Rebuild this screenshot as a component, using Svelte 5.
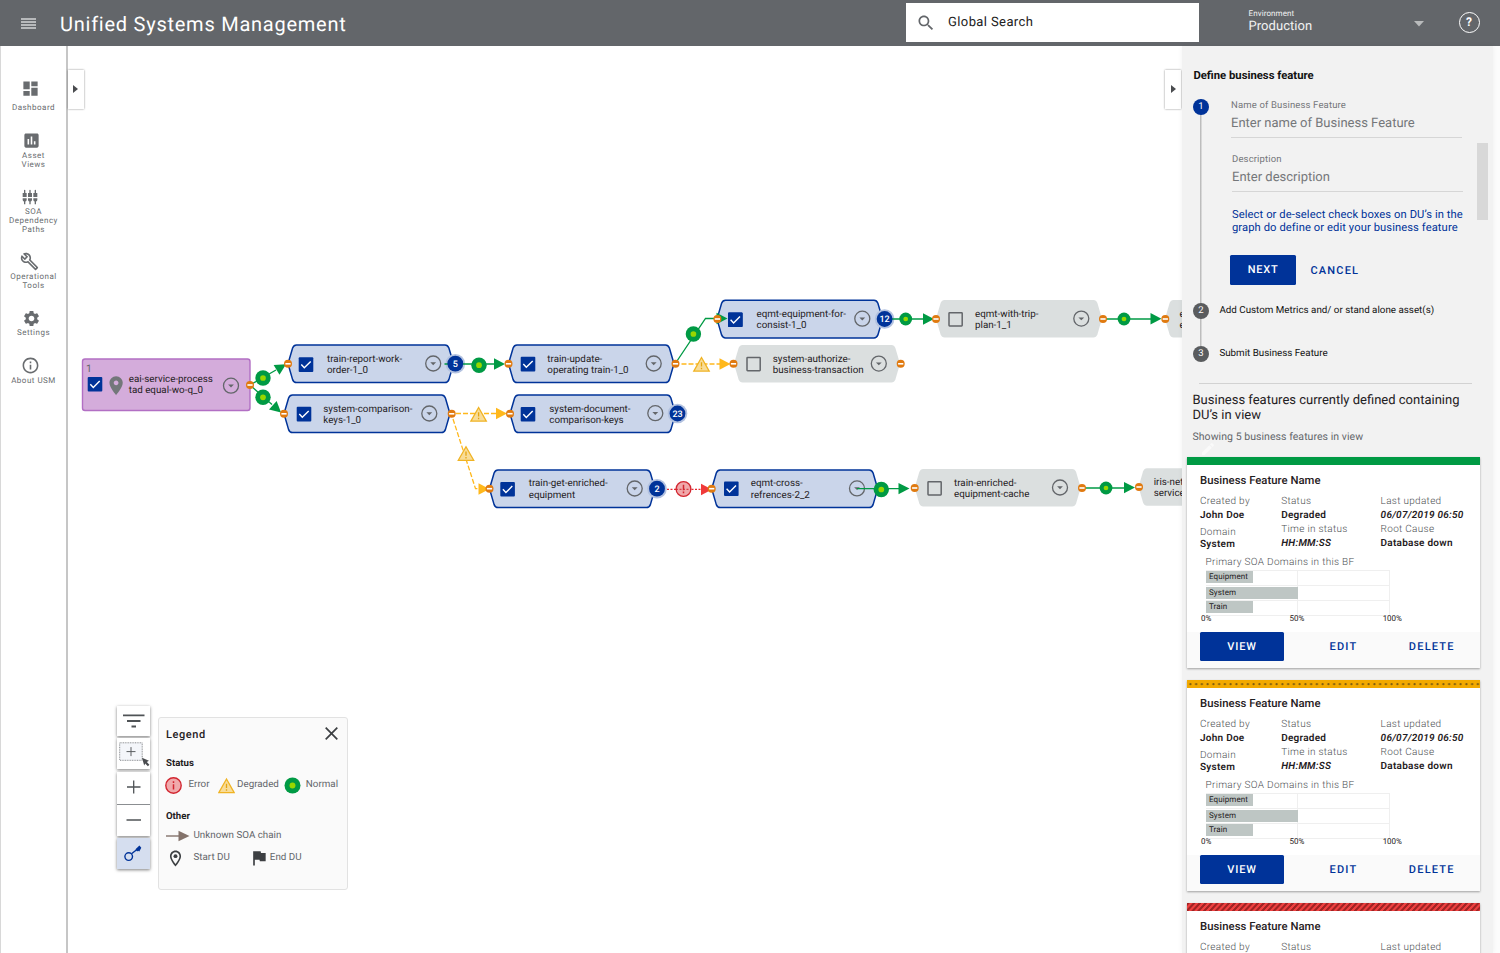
<script>
    const navItems = [
        {lines: ["Dashboard"], icon: "M3 13h8V3H3v10zm0 8h8v-6H3v6zm10 0h8V11h-8v10zm0-18v6h8V3h-8z"},
        {lines: ["Asset", "Views"], icon: "M19 3H5c-1.1 0-2 .9-2 2v14c0 1.1.9 2 2 2h14c1.1 0 2-.9 2-2V5c0-1.1-.9-2-2-2zM9 17H7v-7h2v7zm4 0h-2V7h2v10zm4 0h-2v-4h2v4z"},
        {lines: ["SOA", "Dependency", "Paths"], icon: "M5 2c0-.55-.45-1-1-1s-1 .45-1 1v4H1v6h6V6H5V2zm4 14c0 1.3.84 2.4 2 2.82V23h2v-4.18c1.16-.41 2-1.51 2-2.82v-2H9v2zm-8 0c0 1.3.84 2.4 2 2.82V23h2v-4.18C6.16 18.4 7 17.3 7 16v-2H1v2zM21 6V2c0-.55-.45-1-1-1s-1 .45-1 1v4h-2v6h6V6h-2zm-8-4c0-.55-.45-1-1-1s-1 .45-1 1v4H9v6h6V6h-2V2zm4 14c0 1.3.84 2.4 2 2.82V23h2v-4.18c1.16-.41 2-1.51 2-2.82v-2h-6v2z"},
        {lines: ["Operational", "Tools"], icon: "M22.61 18.99l-9.08-9.08c.93-2.34.45-5.1-1.44-7C9.79.61 6.21.4 3.66 2.26L7.5 6.11 6.08 7.52 2.25 3.69C.39 6.23.6 9.82 2.9 12.11c1.86 1.86 4.57 2.35 6.89 1.48l9.11 9.11c.39.39 1.02.39 1.41 0l2.3-2.3c.4-.38.4-1.01 0-1.41zm-3 1.6l-9.46-9.46c-.61.45-1.29.72-2 .82-1.36.2-2.79-.21-3.83-1.25C3.37 9.76 2.93 8.5 3 7.26l3.09 3.09 4.24-4.24-3.09-3.09c1.24-.07 2.49.37 3.44 1.31 1.08 1.08 1.49 2.57 1.24 3.96-.12.71-.42 1.37-.88 1.96l9.45 9.45-.88.89z"},
        {lines: ["Settings"], icon: "M19.14 12.94c.04-.3.06-.61.06-.94 0-.32-.02-.64-.07-.94l2.03-1.58c.18-.14.23-.41.12-.61l-1.92-3.32c-.12-.22-.37-.29-.59-.22l-2.39.96c-.5-.38-1.03-.7-1.62-.94L14.4 2.81c-.04-.24-.24-.41-.48-.41h-3.84c-.24 0-.43.17-.47.41L9.25 5.35c-.59.24-1.13.57-1.62.94l-2.39-.96c-.22-.08-.47 0-.59.22L2.74 8.87c-.12.21-.08.47.12.61l2.03 1.58c-.05.3-.09.63-.09.94s.02.64.07.94l-2.03 1.58c-.18.14-.23.41-.12.61l1.92 3.32c.12.22.37.29.59.22l2.39-.96c.5.38 1.03.7 1.62.94l.36 2.54c.05.24.24.41.48.41h3.84c.24 0 .44-.17.47-.41l.36-2.54c.59-.24 1.13-.56 1.62-.94l2.39.96c.22.08.47 0 .59-.22l1.92-3.32c.12-.22.07-.47-.12-.61l-2.01-1.58zM12 15.6c-1.98 0-3.6-1.62-3.6-3.6s1.62-3.6 3.6-3.6 3.6 1.62 3.6 3.6-1.62 3.6-3.6 3.6z"},
        {lines: ["About USM"], icon: "M11 7h2v2h-2zm0 4h2v6h-2zm1-9C6.48 2 2 6.48 2 12s4.48 10 10 10 10-4.48 10-10S17.52 2 12 2zm0 18c-4.41 0-8-3.59-8-8s3.59-8 8-8 8 3.59 8 8-3.59 8-8 8z"}
    ];

    // x / y is the top left of the hexagon, the rest are graph coordinates
    const nodes = [
        {x: 288, y: 345, w: 165.5, on: true, check: [298.7, 357.3], text: [327, 361.6], menu: [433.2, 363.5], lines: ["train-report-work-", "order-1_0"]},
        {x: 284, y: 395, w: 166, on: true, check: [296.7, 406.8], text: [323.3, 411.8], menu: [429.3, 413.5], lines: ["system-comparison-", "keys-1_0"]},
        {x: 508.5, y: 345, w: 165.5, on: true, check: [520.7, 356.8], text: [547.3, 361.6], menu: [653.7, 363.5], lines: ["train-update-", "operating train-1_0"]},
        {x: 510, y: 395, w: 165.5, on: true, check: [520.7, 407], text: [549.3, 411.5], menu: [655.3, 413.2], lines: ["system-document-", "comparison-keys"]},
        {x: 717, y: 300.3, w: 165.5, on: true, check: [728, 312.5], text: [756.5, 316.6], menu: [862.3, 318.7], lines: ["eqmt-equipment-for-", "consist-1_0"]},
        {x: 489.5, y: 470, w: 165.5, on: true, check: [500.3, 482], text: [528.7, 486.2], menu: [634.7, 488.5], lines: ["train-get-enriched-", "equipment"]},
        {x: 711.7, y: 470, w: 166, on: true, check: [724, 481.5], text: [750.7, 486.2], menu: [857, 488.4], lines: ["eqmt-cross-", "refrences-2_2"]},
        {x: 734, y: 345, w: 166, on: false, check: [746.3, 356.8], text: [772.7, 361.6], menu: [878.8, 363.6], lines: ["system-authorize-", "business-transaction"]},
        {x: 936, y: 300, w: 166, on: false, check: [948.3, 312], text: [975, 316.6], menu: [1081.3, 318.6], lines: ["eqmt-with-trip-", "plan-1_1"]},
        {x: 914.7, y: 469, w: 166, on: false, check: [927.3, 481], text: [954, 485.6], menu: [1060, 487.5], lines: ["train-enriched-", "equipment-cache"]},
        {x: 1165, y: 300, w: 167, on: false, text: [1179.5, 316.6], lines: ["e", "e"]},
        {x: 1138.5, y: 468.3, w: 167, on: false, text: [1153.7, 484.8], lines: ["iris-net", "service"]}
    ];

    const links = [
        {kind: "normal", d: "M250 385L276 370", tip: [286, 364.3], angle: -31},
        {kind: "normal", d: "M250 385L272 404.5", tip: [281, 412.6], angle: 42},
        {kind: "normal", d: "M444.5 364H495", tip: [505, 364], angle: 0},
        {kind: "normal", d: "M675 364L705.5 318.5H718", tip: [727.5, 318.5], angle: 0},
        {kind: "normal", d: "M885 319H924", tip: [934, 319], angle: 0},
        {kind: "normal", d: "M1103 319H1151", tip: [1161.5, 318.7], angle: 0},
        {kind: "normal", d: "M857 488.7H899", tip: [909.5, 488.6], angle: 0},
        {kind: "normal", d: "M1082 488H1124", tip: [1135, 487.6], angle: 0},
        {kind: "degraded", d: "M681.5 364H720", tip: [730.5, 364], angle: 0},
        {kind: "degraded", d: "M456 413.5H496", tip: [507, 413.5], angle: 0},
        {kind: "degraded", d: "M453 419L475.5 488.6H479", tip: [489.5, 489], angle: 0},
        {kind: "error", d: "M667 489.3H703", tip: [712, 489.5], angle: 0}
    ];

    const normals = [[263, 378, 7.7], [263, 397.3, 7.7], [479, 365.2, 7.7], [693.4, 334, 7.7], [905.7, 319, 6.4], [1124, 319, 6.4], [881.3, 489.5, 7.7], [1106, 488, 6.4]];
    const warnings = [[701.5, 364.5], [478.6, 414.5], [466, 453.7]];
    const ports = [[250, 385], [288, 363.8], [284, 413.8], [451.7, 413.8], [508.5, 363.8], [675.5, 363.8], [510, 413.7], [717.4, 319], [733.5, 363.8], [900.7, 363.8], [489.5, 488.7], [711.7, 488.7], [936, 319], [1103, 319], [1165.3, 319], [914.7, 488], [1082, 488], [1139, 487]];
    const badges = [[455.3, 363.7, 5], [677.5, 413.5, 23], [884.6, 319, 12], [657, 488.7, 2]];

    const statuses = ["ok", "warn", "bad"];
    const domains = [{name: "Equipment", share: 25.5}, {name: "System", share: 50.5}, {name: "Train", share: 25.5}];

    // hexagon with slightly rounded corners
    function hexagon(x, y, w, h) {
        const r = x + w;
        const b = y + h;
        const m = y + h / 2;
        return `M${x} ${m}L${x + 4.6} ${y + 3}Q${x + 5.8} ${y} ${x + 8.5} ${y}H${r - 8.5}Q${r - 5.8} ${y} ${r - 4.6} ${y + 3}L${r} ${m}L${r - 4.6} ${b - 3}Q${r - 5.8} ${b} ${r - 8.5} ${b}H${x + 8.5}Q${x + 5.8} ${b} ${x + 4.6} ${b - 3}Z`;
    }
</script>

{#snippet checkbox(x, y, on)}
    {#if on}
        <rect {x} {y} width="14.6" height="14.6" rx="1" fill="#003399"/>
        <path d="M{x + 2.6} {y + 7.3}l3 3.2l6.4 -6.4" fill="none" stroke="#fff" stroke-width="1.4"/>
    {:else}
        <rect x={x + .7} y={y + .7} width="13.2" height="13.2" rx=".6" fill="none" stroke="#63666a" stroke-width="1.5"/>
    {/if}
{/snippet}

{#snippet menuButton(x, y)}
    <circle cx={x} cy={y} r="7.5" fill="none" stroke="#63666a" stroke-width="1.3"/>
    <path d="M{x - 2.9} {y - 1.2}h5.8l-2.9 2.9z" fill="#63666a"/>
{/snippet}

{#snippet normalIcon(x, y, r)}
    <circle cx={x} cy={y} {r} fill="#009a44"/>
    <circle cx={x} cy={y} r={r * .37} fill="#97d700"/>
{/snippet}

{#snippet warnIcon(x, y)}
    <path d="M{x} {y - 7}l7.7 13.6h-15.4z" fill="#f8dc98" stroke="#f0b323" stroke-width="1.3"/>
    <path d="M{x} {y - 2.2}v4.2m0 1.2v1.6" stroke="#e5a510" stroke-width="1.3"/>
{/snippet}

{#snippet cardTop(status)}
    <svg class="strip" width="293" height="8">
        <defs>
            <pattern id="dots" width="5.75" height="8" patternUnits="userSpaceOnUse">
                <circle cx="3.4" cy="4.2" r="1.1" fill="#7a5a10"/>
            </pattern>
            <pattern id="stripes" width="5.8" height="8" patternUnits="userSpaceOnUse" patternTransform="skewX(-43)">
                <rect width="2.9" height="8" fill="#a02424"/>
            </pattern>
        </defs>
        <rect class={status} width="293" height="8"/>
        {#if status === "warn"}
            <rect width="293" height="8" fill="url(#dots)"/>
        {:else if status === "bad"}
            <rect width="293" height="8" fill="url(#stripes)"/>
        {/if}
    </svg>
{/snippet}

<div class="app">
    <header>
        <svg class="burger" width="15" height="11"><path d="M0 1h15M0 4h15M0 7h15M0 10h15" stroke="#d4d5d6" stroke-width="1.3"/></svg>
        <h1>Unified Systems Management</h1>
        <div class="search">
            <svg width="20" height="20" viewBox="0 0 24 24" fill="#63666a"><path d="M15.5 14h-.79l-.28-.27C15.41 12.59 16 11.11 16 9.5 16 5.91 13.09 3 9.5 3S3 5.91 3 9.5 5.91 16 9.5 16c1.61 0 3.09-.59 4.23-1.57l.27.28v.79l5 4.99L20.49 19l-4.99-5zm-6 0C7.01 14 5 11.99 5 9.5S7.01 5 9.5 5 14 7.01 14 9.5 11.99 14 9.5 14z"/></svg>
            <span>Global Search</span>
        </div>
        <div class="env">
            <div>
                <div class="env-label">Environment</div>
                <div class="env-value">Production</div>
            </div>
            <svg width="10" height="6"><path d="M0 0h10l-5 5.5z" fill="#b9bbbc"/></svg>
        </div>
        <div class="help">?</div>
    </header>

    <div class="body">
        <nav>
            {#each navItems as item}
                <a href="#top">
                    <svg width="19" height="19" viewBox="0 0 24 24"><path d={item.icon}/></svg>
                    {#each item.lines as line}
                        <span>{line}</span>
                    {/each}
                </a>
            {/each}
        </nav>

        <main>
            <svg class="graph" viewBox="68 45 1114 908" width="1114" height="908">
                <rect x="82.5" y="359" width="167.5" height="51.5" rx="2.5" fill="#d4acdb" stroke="#b26fc4" stroke-width="1.4"/>
                <text class="order" x="86" y="372">1</text>
                {@render checkbox(87.7, 377, true)}
                <path transform="translate(104.7 374.3) scale(.95)" d="M12 2C8.13 2 5 5.13 5 9c0 5.25 7 13 7 13s7-7.75 7-13c0-3.87-3.13-7-7-7zm0 9.5c-1.38 0-2.5-1.12-2.5-2.5s1.12-2.5 2.5-2.5 2.5 1.12 2.5 2.5-1.12 2.5-2.5 2.5z" fill="#73777a"/>
                <text x="128.7" y="381.7">eai-service-process</text>
                <text x="128.7" y="393">tad equal-wo-q_0</text>
                {@render menuButton(231, 385.7)}

                {#each nodes as node}
                    <path d={hexagon(node.x, node.y, node.w, node.on ? 37.6 : 37.4)} class={node.on ? "hex on" : "hex"}/>
                    {#if node.check}
                        {@render checkbox(node.check[0], node.check[1], node.on)}
                    {/if}
                    <text x={node.text[0]} y={node.text[1]}>{node.lines[0]}</text>
                    <text x={node.text[0]} y={node.text[1] + 11.3}>{node.lines[1]}</text>
                    {#if node.menu}
                        {@render menuButton(node.menu[0], node.menu[1])}
                    {/if}
                {/each}

                {#each badges as [x, y]}
                    <circle cx={x} cy={y} r="9.8" fill="#b3c2e0"/>
                {/each}
                {#each links as link}
                    <g class={link.kind}>
                        <path class="line" d={link.d}/>
                        <path class="head" transform="translate({link.tip[0]} {link.tip[1]}) rotate({link.angle})" d="M0 0L-11 -5.7V5.7z"/>
                    </g>
                {/each}
                {@render checkbox(728, 312.5, true)}

                {#each normals as [x, y, r]}
                    {@render normalIcon(x, y, r)}
                {/each}
                {#each warnings as [x, y]}
                    {@render warnIcon(x, y)}
                {/each}
                <circle cx="683.5" cy="489" r="7.4" fill="#f0a9ab" stroke="#d22630" stroke-width="1.3"/>
                <path d="M676 489.3h15" stroke="#d22630" stroke-dasharray="2 1.5"/>
                <path d="M683.5 484.8v5.4m0 1.4v1.7" stroke="#d22630" stroke-width="1.5"/>

                {#each ports as [x, y]}
                    <circle cx={x} cy={y} r="4" fill="#e07a10"/>
                    <rect x={x - 2.6} y={y - .8} width="5.2" height="1.6" fill="#fff"/>
                {/each}
                {#each badges as [x, y, count]}
                    <circle cx={x} cy={y} r="7.9" fill="#003399"/>
                    <text class="count" {x} y={y + 3.1}>{count}</text>
                {/each}
            </svg>

            <button class="handle left" aria-label="Expand"><svg width="5" height="8"><path d="M0 0l5 4l-5 4z" fill="#4a4c4f"/></svg></button>
            <button class="handle right" aria-label="Collapse"><svg width="5" height="8"><path d="M0 0l5 4l-5 4z" fill="#4a4c4f"/></svg></button>

            <div class="tools">
                <button aria-label="Filter"><svg width="33" height="30"><path d="M6 9.4h21.5M10 15h13.5M14.5 20.5h4.5" stroke="#4f5356" stroke-width="1.8"/></svg></button>
                <button aria-label="Select area">
                    <svg width="33" height="31" viewBox="0 -.8 33 31">
                        <rect x="2.7" y="4" width="22.5" height="17.5" fill="#f4f6fa" stroke="#8b8e91" stroke-dasharray="1 .7"/>
                        <path d="M9.5 12.8h9M14 8.3v9" stroke="#5a5d60"/>
                        <path d="M25 19l7 3l-2.2 1.2l2.6 2.7l-1.5 1.5l-2.7-2.8l-1 2.1z" fill="#4a4c4f"/>
                    </svg>
                </button>
                <div class="zoom">
                    <button aria-label="Zoom in"><svg width="33" height="32"><path d="M10 15h13.5M16.7 8.5v13" stroke="#4f5356" stroke-width="1.3"/></svg></button>
                    <button aria-label="Zoom out"><svg width="33" height="31"><path d="M9.5 15h14.5" stroke="#4f5356" stroke-width="1.5"/></svg></button>
                </div>
                <button class="active" aria-label="Legend">
                    <svg width="33" height="31" fill="none" stroke="#003399">
                        <circle cx="11.7" cy="18.6" r="3.8" stroke-width="1.4"/>
                        <path d="M14.5 15.7L23.2 9" stroke-width="1.4"/>
                        <path d="M18.5 11.2l3.9-3.7l1.9 2.3l-2 3.7l-1.2-.7l-1 .8z" fill="#003399" stroke="none"/>
                    </svg>
                </button>
            </div>

            <section class="legend">
                <div class="legend-head">
                    <h2>Legend</h2>
                    <svg width="13" height="13"><path d="M.7.7l11.6 11.6M12.3.7L.7 12.3" stroke="#3c3f42" stroke-width="1.7"/></svg>
                </div>
                <h3>Status</h3>
                <div class="row status">
                    <svg width="17" height="17"><circle cx="8.5" cy="8.5" r="7.7" fill="#f0a9ab" stroke="#d22630" stroke-width="1.4"/><path d="M8.5 4.3v1.6m0 1.4v5.2" stroke="#d22630" stroke-width="1.5"/></svg>
                    <span>Error</span>
                    <svg width="17" height="17">{@render warnIcon(8.5, 9)}</svg>
                    <span>Degraded</span>
                    <svg width="17" height="17">{@render normalIcon(8.5, 8.5, 8)}</svg>
                    <span>Normal</span>
                </div>
                <h3 class="other">Other</h3>
                <div class="row chain">
                    <svg width="24" height="12"><path d="M0 6h13" stroke="#83726a" stroke-width="1.4"/><path d="M12.5.7L23.5 6l-11 5.3z" fill="#83726a"/></svg>
                    <span>Unknown SOA chain</span>
                </div>
                <div class="row du">
                    <svg width="19" height="19" viewBox="0 0 24 24" fill="#3c3f42"><path d="M12 2C8.13 2 5 5.13 5 9c0 5.25 7 13 7 13s7-7.75 7-13c0-3.87-3.13-7-7-7zM7 9c0-2.76 2.24-5 5-5s5 2.24 5 5c0 2.88-2.88 7.19-5 9.88C9.92 16.21 7 11.85 7 9z"/><circle cx="12" cy="9" r="2.5"/></svg>
                    <span>Start DU</span>
                    <svg width="20" height="20" viewBox="0 0 24 24" fill="#3c3f42"><path d="M14.4 6L14 4H5v17h2v-7h5.6l.4 2h7V6z"/></svg>
                    <span>End DU</span>
                </div>
            </section>
        </main>

        <aside>
            <div class="panel">
                <h2>Define business feature</h2>
                <div class="step">
                    <div class="marker"><b class="current">1</b></div>
                    <div class="form">
                        <label>Name of Business Feature<input placeholder="Enter name of Business Feature"/></label>
                        <label>Description<input placeholder="Enter description"/></label>
                        <p>Select or de-select check boxes on DU’s in the<br/>graph do define or edit your business feature</p>
                        <div class="buttons">
                            <button class="primary">NEXT</button>
                            <button class="flat">CANCEL</button>
                        </div>
                    </div>
                </div>
                <div class="step second">
                    <div class="marker"><b>2</b></div>
                    <span>Add Custom Metrics and/ or stand alone asset(s)</span>
                </div>
                <div class="step last">
                    <div class="marker"><b>3</b></div>
                    <span>Submit Business Feature</span>
                </div>
                <hr/>
                <h4>Business features currently defined containing<br/>DU’s in view</h4>
                <div class="showing">
                    Showing 5 business features in view
                    <svg class="pencil" width="16" height="16" viewBox="0 0 24 24"><path d="M3 17.25V21h3.75L17.81 9.94l-3.75-3.75L3 17.25zM20.71 7.04c.39-.39.39-1.02 0-1.41l-2.34-2.34c-.39-.39-1.02-.39-1.41 0l-1.83 1.83 3.75 3.75 1.83-1.83z" fill="#fafafa"/></svg>
                </div>

                {#each statuses as status}
                    <article>
                        {@render cardTop(status)}
                        <h5>Business Feature Name</h5>
                        <div class="facts">
                            <dl class="made">
                                <dt>Created by</dt><dd>John Doe</dd>
                                <dt>Domain</dt><dd>System</dd>
                            </dl>
                            <dl>
                                <dt>Status</dt><dd>Degraded</dd>
                                <dt>Time in status</dt><dd><i>HH:MM:SS</i></dd>
                            </dl>
                            <dl>
                                <dt>Last updated</dt><dd><i>06/07/2019 06:50</i></dd>
                                <dt>Root Cause</dt><dd>Database down</dd>
                            </dl>
                        </div>
                        <div class="chart-title">Primary SOA Domains in this BF</div>
                        <div class="chart">
                            {#each domains as domain}
                                <div class="track"><div class="bar" style="width: {domain.share}%">{domain.name}</div></div>
                            {/each}
                        </div>
                        <div class="axis"><span>0%</span><span>50%</span><span>100%</span></div>
                        <div class="actions">
                            <button class="primary">VIEW</button>
                            <button class="flat">EDIT</button>
                            <button class="flat">DELETE</button>
                        </div>
                    </article>
                {/each}
                <div class="thumb"></div>
            </div>
        </aside>
    </div>
</div>

<style>
    :global(body) {
        overflow: hidden;
    }

    .app {
        width: 1500px;
        height: 953px;
        display: flex;
        flex-direction: column;
        overflow: hidden;
        background: #fff;
        color: #1f2022;
        font-family: Roboto, "Liberation Sans", sans-serif;
        text-rendering: geometricPrecision;
    }

    .app *, .app {
        box-sizing: border-box;
    }

    h1, h2, h3, h4, h5, p, dl, dd {
        margin: 0;
    }

    svg {
        display: block;
        flex: none;
    }

    button {
        border: 0;
        padding: 0;
        background: none;
        font-family: inherit;
        text-rendering: inherit;
    }

    header {
        flex: none;
        height: 45.5px;
        display: flex;
        align-items: center;
        background: #63666a;
        padding-left: 21px;
        color: #fff;
    }

    .burger {
        margin-top: 1px;
    }

    h1 {
        margin: 3px auto 0 24px;
        font-size: 20px;
        font-weight: 400;
        letter-spacing: .75px;
    }

    .search {
        width: 293.5px;
        height: 39px;
        padding: 0 0 2px 10px;
        display: flex;
        align-items: center;
        gap: 12.5px;
        background: #fff;
        color: #212121;
        font-size: 13px;
        letter-spacing: .4px;
    }

    .search svg {
        margin-top: 3px;
    }

    .search span {
        margin-top: 1px;
    }

    .env {
        width: 175px;
        margin: 0 35px 4px 49.5px;
        display: flex;
        align-items: flex-end;
        justify-content: space-between;
        color: #f2f2f2;
    }

    .env svg {
        margin-bottom: 6.5px;
    }

    .env-label {
        font-size: 8px;
        line-height: 12px;
        letter-spacing: .1px;
    }

    .env-value {
        font-size: 13px;
        line-height: 14px;
        letter-spacing: .05px;
    }

    .help {
        width: 21px;
        height: 21px;
        margin-right: 20.5px;
        border: 1.3px solid #fff;
        border-radius: 50%;
        font-size: 12px;
        font-weight: 700;
        line-height: 19px;
        text-align: center;
    }

    .body {
        flex: 1;
        min-height: 0;
        display: flex;
    }

    nav {
        flex: none;
        width: 68px;
        border-left: 1px solid #d8d8d8;
        border-right: 2px solid #c6c6c6;
        padding-top: 33.5px;
    }

    nav a {
        display: flex;
        flex-direction: column;
        align-items: center;
        color: #696c6f;
        font-size: 8px;
        line-height: 9px;
        letter-spacing: .5px;
        text-decoration: none;
    }

    nav svg {
        margin: 0 6px 4.5px 0;
        fill: #696c6f;
    }

    nav a:nth-child(2) {
        margin-top: 19.5px;
    }

    nav a:nth-child(3) {
        margin-top: 19.5px;
    }

    nav a:nth-child(4) {
        margin-top: 17.5px;
    }

    nav a:nth-child(5) {
        margin-top: 19px;
    }

    nav a:nth-child(6) {
        margin-top: 19px;
    }

    nav a:nth-child(2) svg {
        margin: 0 4px .5px 0;
    }

    nav a:nth-child(5) svg {
        margin: 0 4px .5px 0;
    }

    nav a:nth-child(3) svg {
        width: 16px;
        height: 16px;
        margin: 1px 7px 2px 0;
    }

    nav a:nth-child(4) svg {
        margin: 0 8px 1px 0;
    }

    nav a:nth-child(6) svg {
        margin: 0 6px .5px 0;
    }

    main {
        position: relative;
        flex: none;
        width: 1114px;
    }

    .graph {
        margin-top: -.5px;
    }

    .graph text {
        font-size: 9.8px;
        fill: #1f2022;
    }

    .graph .order {
        font-size: 10.5px;
        fill: #63666a;
    }

    .graph .count {
        font-size: 9px;
        font-weight: 500;
        fill: #fff;
        text-anchor: middle;
    }

    .hex {
        fill: #dbdfdf;
    }

    .hex.on {
        fill: #cad5ea;
        stroke: #003399;
        stroke-width: 1.5;
    }

    .line {
        fill: none;
        stroke-width: 1.3;
    }

    .normal .line {
        stroke: #009a44;
    }

    .normal .head {
        fill: #009a44;
    }

    .degraded .line {
        stroke: #ffb81c;
        stroke-dasharray: 5 2;
    }

    .degraded .head {
        fill: #ffb81c;
    }

    .error .line {
        stroke: #e8262e;
        stroke-dasharray: 2 1.5;
    }

    .error .head {
        fill: #f03a3a;
    }

    .handle {
        position: absolute;
        top: 24px;
        width: 16px;
        height: 39px;
        display: flex;
        align-items: center;
        justify-content: center;
        background: #fff;
        box-shadow: 0 0 2px rgba(0, 0, 0, .45);
    }

    .handle.left {
        left: -.5px;
    }

    .handle.right {
        right: 1px;
    }

    .tools {
        position: absolute;
        left: 48.6px;
        top: 660px;
        width: 33px;
        display: flex;
        flex-direction: column;
        gap: 2.5px;
    }

    .tools > * {
        background: #fff;
        box-shadow: 0 1px 3px rgba(0, 0, 0, .5);
    }

    .tools > .active {
        background: #d5deef;
    }

    .zoom button {
        display: block;
    }

    .zoom button + button {
        border-top: 1px solid #8b8e91;
    }

    .legend {
        position: absolute;
        left: 90px;
        top: 671px;
        width: 190px;
        height: 173.5px;
        padding: 10.4px 9px 0 7px;
        border: 1px solid #e2e2e2;
        border-radius: 3px;
        background: #fafafa;
        color: #63666a;
        font-size: 9.8px;
        line-height: 14px;
    }

    .legend-head {
        display: flex;
        align-items: center;
        justify-content: space-between;
    }

    .legend-head svg {
        margin-top: -2px;
    }

    .legend h2 {
        color: #1f2022;
        font-size: 11px;
        font-weight: 500;
        letter-spacing: .6px;
    }

    .legend h3 {
        margin-top: 15.5px;
        color: #1f2022;
        font-size: 9.6px;
        font-weight: 700;
    }

    .legend h3.other {
        margin-top: 16px;
    }

    .row {
        display: flex;
        align-items: center;
    }

    .status {
        margin: 5.5px 0 0 -1.5px;
    }

    .status span:nth-child(2) {
        margin: 0 8.5px 0 7px;
    }

    .status span:nth-child(4) {
        margin: 0 5.5px 0 2px;
    }

    .status span:last-child {
        margin-left: 4.5px;
    }

    .chain {
        margin-top: 4.7px;
        gap: 3.5px;
    }

    .du {
        margin-top: 5.7px;
    }

    .du span:nth-child(2) {
        margin: 0 19px 0 8.5px;
    }

    .du span:last-child {
        margin-left: 1px;
    }

    aside {
        position: relative;
        flex: none;
        width: 318px;
        background: #fcfcfc;
    }

    .panel {
        width: 311px;
        height: 100%;
        padding: 23px 13px 0 11px;
        background: #f2f2f2;
        box-shadow: 0 0 5px rgba(0, 0, 0, .06);
    }

    .panel h2 {
        margin: 0 0 16px .4px;
        color: #111;
        font-size: 11.3px;
        font-weight: 700;
        line-height: 14px;
    }

    .step {
        display: flex;
        height: 204px;
        color: #111;
        font-size: 9.8px;
        line-height: 16px;
    }

    .step.second {
        height: 43px;
    }

    .step.last {
        height: 37.5px;
    }

    .step > span {
        margin-left: 10.4px;
    }

    .marker {
        width: 16px;
        background: linear-gradient(#bdbdbd, #bdbdbd) center / 1.5px 100% no-repeat;
    }

    .last .marker {
        background: none;
    }

    .marker b {
        display: block;
        height: 16px;
        border-radius: 50%;
        background: #5a5c5e;
        color: #fff;
        font-size: 9.5px;
        font-weight: 400;
        text-align: center;
    }

    .marker b.current {
        background: #003399;
    }

    .form {
        margin-left: 22px;
        padding-top: .7px;
    }

    .form label {
        display: block;
        height: 54px;
        color: #75777a;
        font-size: 9.5px;
        line-height: 13px;
        letter-spacing: .15px;
    }

    .form label + label {
        margin-left: 1px;
    }

    .form input {
        display: block;
        width: 231px;
        height: 26px;
        border: 0;
        border-bottom: 1px solid #d6d6d6;
        padding: 0 0 1.5px;
        background: none;
        font-family: inherit;
        font-size: 13px;
        text-rendering: inherit;
    }

    .form input::placeholder {
        color: #75777a;
        opacity: 1;
    }

    .form p {
        margin: .4px 0 0 1px;
        color: #003399;
        font-size: 11.2px;
        line-height: 13.3px;
        letter-spacing: .09px;
        white-space: nowrap;
    }

    .buttons {
        display: flex;
        align-items: center;
        gap: 14.5px;
        margin: 21px 0 0 -.6px;
    }

    .primary {
        height: 29.5px;
        border-radius: 1.5px;
        background: #003399;
        color: #fff;
        font-size: 11px;
        font-weight: 500;
        letter-spacing: .8px;
    }

    .flat {
        color: #003399;
        font-size: 11px;
        font-weight: 500;
        letter-spacing: 1.2px;
    }

    .buttons .primary {
        width: 65.5px;
    }

    .buttons .flat {
        padding-top: 2px;
    }

    hr {
        width: 273px;
        margin: 0 0 0 6px;
        border: 0;
        border-top: 1px solid #d2d2d2;
    }

    h4 {
        margin-top: 8.5px;
        margin-left: -.5px;
        font-size: 13px;
        font-weight: 400;
        line-height: 15.3px;
        white-space: nowrap;
    }

    .showing {
        position: relative;
        margin: 6.5px 0 14.5px -.5px;
        color: #63666a;
        font-size: 10.5px;
        line-height: 13px;
        letter-spacing: .05px;
    }

    .pencil {
        position: absolute;
        left: 7px;
        top: 11px;
    }

    article {
        width: 293px;
        height: 210.5px;
        margin: 0 0 12.5px -6px;
        display: flex;
        flex-direction: column;
        background: #fff;
        box-shadow: 0 1px 2px rgba(0, 0, 0, .35);
    }

    .ok {
        fill: #009a44;
    }

    .warn {
        fill: #f2a900;
    }

    .bad {
        fill: #ef4040;
    }

    h5 {
        margin: 8px 0 0 13px;
        font-size: 11.3px;
        font-weight: 500;
        line-height: 15px;
        letter-spacing: .03px;
    }

    .facts {
        display: flex;
        padding-left: 13px;
        margin-top: 6.5px;
        font-size: 10px;
        line-height: 14px;
        letter-spacing: .25px;
        white-space: nowrap;
    }

    dl {
        width: 99.5px;
    }

    .made {
        width: 81.3px;
    }

    dt {
        color: #4d5053;
        font-weight: 300;
        letter-spacing: .3px;
    }

    dd {
        font-weight: 600;
    }

    .made dt:nth-child(3) {
        padding-top: 3px;
        line-height: 13px;
    }

    .made dd:nth-child(4) {
        line-height: 12px;
    }

    .chart-title {
        margin: 5px 0 0 18.5px;
        color: #4d5053;
        font-size: 10px;
        font-weight: 300;
        line-height: 13px;
        letter-spacing: .3px;
    }

    .chart {
        width: 184px;
        margin: 1.2px 0 0 19px;
        border: 1px solid #efefef;
        border-left: 0;
        background: linear-gradient(#efefef, #efefef) center / 1px 100% no-repeat;
    }

    .track {
        height: 14.6px;
        padding-top: .5px;
        font-size: 8px;
        line-height: 12px;
        letter-spacing: .1px;
    }

    .track + .track {
        border-top: 1px solid #efefef;
    }

    .bar {
        height: 12px;
        padding-left: 3px;
        background: #bec6c4;
    }

    .axis {
        width: 201px;
        margin-top: -1.5px;
        margin-left: 14px;
        display: flex;
        justify-content: space-between;
        font-size: 8px;
        line-height: 9px;
    }

    .actions {
        flex: 1;
        margin-top: 9.2px;
        display: flex;
        align-items: flex-start;
        padding-left: 13px;
        background: #fafafa;
    }

    .actions .primary {
        width: 84px;
        height: 29px;
    }

    .actions .flat {
        height: 29px;
        margin-left: 45.5px;
    }

    .actions .flat + .flat {
        margin-left: 51.5px;
    }

    .thumb {
        position: absolute;
        left: 295px;
        top: 97.5px;
        width: 11px;
        height: 77px;
        background: #d8d8d8;
    }
</style>
